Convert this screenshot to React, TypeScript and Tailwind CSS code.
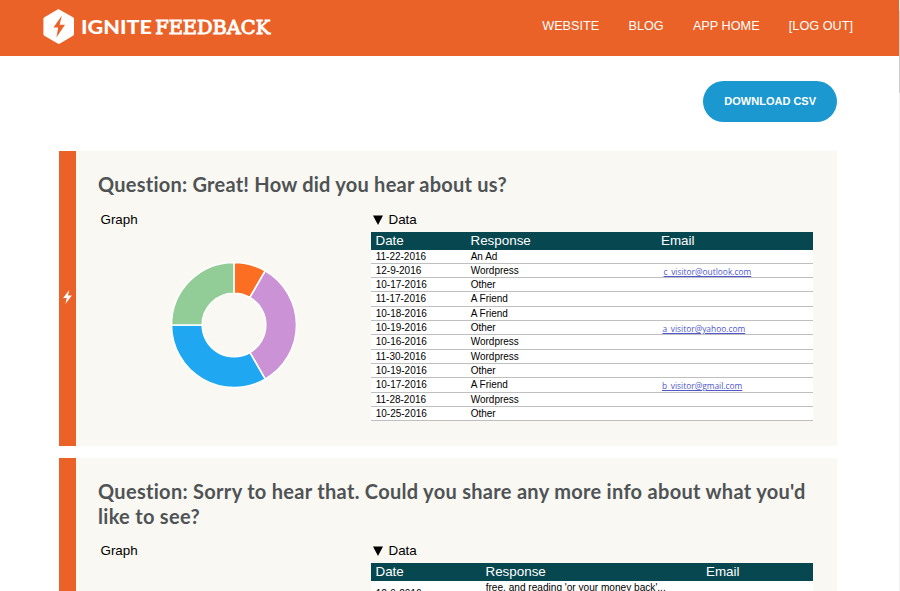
import React from "react";

type Row = { date: string; response: string; email?: string; emailClass?: string };

const rows: Row[] = [
  { date: "11-22-2016", response: "An Ad" },
  { date: "12-9-2016", response: "Wordpress", email: "c_visitor@outlook.com", emailClass: "ml-[3px] w-[88px]" },
  { date: "10-17-2016", response: "Other" },
  { date: "11-17-2016", response: "A Friend" },
  { date: "10-18-2016", response: "A Friend" },
  { date: "10-19-2016", response: "Other", email: "a_visitor@yahoo.com", emailClass: "ml-[2px] w-[83px]" },
  { date: "10-16-2016", response: "Wordpress" },
  { date: "11-30-2016", response: "Wordpress" },
  { date: "10-19-2016", response: "Other" },
  { date: "10-17-2016", response: "A Friend", email: "b_visitor@gmail.com", emailClass: "ml-[1.5px] w-[81px]" },
  { date: "11-28-2016", response: "Wordpress" },
  { date: "10-25-2016", response: "Other" },
];

const BOLT = "M7 0 0 9.2h4.2L2.6 16 10 6.4H5.6Z";

function Logo() {
  return (
    <svg className="h-9 w-[230px] overflow-visible" viewBox="0 0 230 36" fill="#fff">
      <path d="M16.2 0.4 30 8.2Q31 8.8 31 10V25Q31 26.2 30 26.8L17 34.4Q15.8 35 14.6 34.4L1.4 26.8Q.4 26.2 .4 25V10Q.4 8.8 1.4 8.2L14.6.6Q15.4.2 16.2.4Z" />
      <path d="M18.8 6.8 10.4 18.6H15.2L13.4 28.4 22 15.8H16.6Z" fill="#eb6228" />
      <text x="38" y="25.2" textLength="71" lengthAdjust="spacingAndGlyphs" className="font-['Lato',sans-serif] text-[19.5px] font-black">IGNITE</text>
      <text x="112.2" y="25.2" textLength="115" lengthAdjust="spacingAndGlyphs" stroke="#fff" strokeWidth="0.9" className="font-['DejaVu_Serif',serif] text-[18.5px] font-normal">FEEDBACK</text>
    </svg>
  );
}

function Donut() {
  return (
    <svg className="h-[128px] w-[128px]" viewBox="-64 -64 128 128" stroke="#fff" strokeWidth="1.6">
      <path fill="#fc6e21" d="M0-62.5A62.5 62.5 0 0 1 31.25-54.13L15.9-27.54A31.8 31.8 0 0 0 0-31.8Z" />
      <path fill="#cb93d6" d="M31.25-54.13A62.5 62.5 0 0 1 31.25 54.13L15.9 27.54A31.8 31.8 0 0 0 15.9-27.54Z" />
      <path fill="#1fa8f1" d="M31.25 54.13A62.5 62.5 0 0 1-62.5 0H-31.8A31.8 31.8 0 0 0 15.9 27.54Z" />
      <path fill="#92cc96" d="M-62.5 0A62.5 62.5 0 0 1 0-62.5V-31.8A31.8 31.8 0 0 0-31.8 0Z" />
    </svg>
  );
}

function DataTable({ cols, children }: { cols: string; children: React.ReactNode }) {
  return (
    <div className="w-[441.5px]">
      <div className="flex h-5 items-center gap-[5.5px] text-[13.4px] leading-5">
        <svg className="ml-[2px] h-[10px] w-[10px]" viewBox="0 0 10 10"><path d="M0 0.5H10L5 10Z" /></svg>
        Data
      </div>
      <div className={`mt-[2px] grid h-[18px] items-center bg-[#074750] text-[13.4px] leading-[18px] text-white ${cols}`}>
        <span className="pl-[4.5px]">Date</span>
        <span className="pl-[4.5px]">Response</span>
        <span className="pl-[4.5px]">Email</span>
      </div>
      {children}
    </div>
  );
}

function Card({ title, tracking, bolt, children }: { title: string; tracking: string; bolt?: boolean; children: React.ReactNode }) {
  return (
    <section className="flex h-[295px] w-[778px] bg-[#f9f8f3]">
      <div className="flex w-[17px] shrink-0 items-center justify-center bg-[#eb6228] pb-[3px]">
        {bolt && <svg className="h-[14px] w-[9px]" viewBox="0 0 10 16" fill="#fff"><path d={BOLT} /></svg>}
      </div>
      <div className="flex-1 pl-[22px] pt-[21px]">
        <h2 className={`w-[725px] font-['Lato',sans-serif] text-[20px] leading-[24.5px] font-bold text-[#4f5355] ${tracking}`}>{title}</h2>
        {children}
      </div>
    </section>
  );
}

export default function App() {
  return (
    <div className="flex h-[591px] w-[900px] overflow-hidden bg-white font-['Liberation_Sans',Arial,sans-serif] text-black">
      <div className="w-[899px] shrink-0">
        <header className="flex h-14 items-start justify-between bg-[#eb6228] pl-[43px] pr-[46px]">
          <div className="pt-[9px]"><Logo /></div>
          <nav className="flex gap-[29.2px] pt-4 text-[12.7px] leading-5 whitespace-nowrap text-white">
            <a>WEBSITE</a>
            <a>BLOG</a>
            <a>APP HOME</a>
            <a>[LOG OUT]</a>
          </nav>
        </header>
        <div className="flex h-[95px] justify-end pr-[62px] pt-[25px]">
          <button className="h-[41px] w-[133.6px] rounded-full bg-[#1b98cf] text-[11px] font-bold whitespace-nowrap text-white">DOWNLOAD CSV</button>
        </div>
        <main className="flex flex-col gap-3 pl-[59px]">
          <Card title="Question: Great! How did you hear about us?" tracking="tracking-[0.24px]" bolt>
            <div className="mt-[13px] flex">
              <div className="w-[273px] pl-[2.5px]">
                <div className="text-[13.4px] leading-5">Graph</div>
                <div className="pl-[69.5px] pt-[31px]"><Donut /></div>
              </div>
              <DataTable cols="grid-cols-[95px_190.5px_1fr]">
                {rows.map((r, i) => (
                  <div key={i} className="grid h-[14.33px] grid-cols-[95px_190.5px_1fr] border-b border-[#bfbfc1] bg-white text-[10px] leading-[14.5px]">
                    <span className="pl-[4.7px]">{r.date}</span>
                    <span className="pl-[4.7px]">{r.response}</span>
                    <span className="pl-[4px]">
                      {r.email && <a className={`block font-['Open_Sans',sans-serif] text-[8.4px] leading-[15px] whitespace-nowrap text-[#5058cc] underline ${r.emailClass}`}>{r.email}</a>}
                    </span>
                  </div>
                ))}
              </DataTable>
            </div>
          </Card>
          <Card title="Question: Sorry to hear that. Could you share any more info about what you'd like to see?" tracking="tracking-[0.3px]">
            <div className="mt-[13px] flex">
              <div className="w-[273px] pl-[2.5px] text-[13.4px] leading-5">Graph</div>
              <DataTable cols="grid-cols-[110px_220.5px_1fr]">
                <div className="grid h-[40px] grid-cols-[110px_220.5px_1fr] bg-white text-[10.1px] leading-[14px]">
                  <span className="pl-[4.7px] pt-[6px]">12-9-2016</span>
                  <span className="pl-[4.7px]">free, and reading 'or your money back'...</span>
                  <span />
                </div>
              </DataTable>
            </div>
          </Card>
        </main>
      </div>
      <div className="w-px bg-[#f1f1f1] pt-[11px]">
        <div className="h-[82px] bg-[#cdcdcd]" />
      </div>
    </div>
  );
}
